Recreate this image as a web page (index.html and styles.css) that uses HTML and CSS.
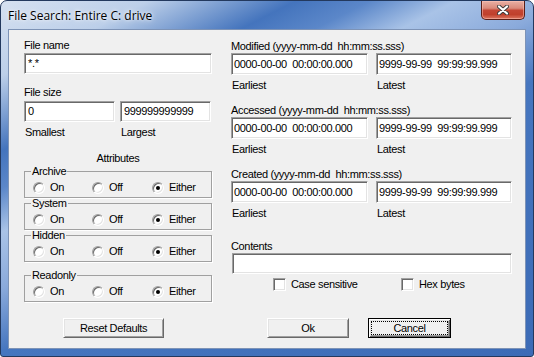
FILE: index.html
```html
<!DOCTYPE html>
<html>
<head>
<meta charset="utf-8">
<title>File Search</title>
<link rel="stylesheet" href="styles.css">
</head>
<body>
<div class="window">
  <div class="titlebar">
    <span class="title">File Search: Entire C: drive</span>
    <div class="close">
      <svg width="12" height="10" viewBox="0 0 12 10">
        <path d="M2 1.5 L10 8.5 M10 1.5 L2 8.5" stroke="#3a3a3a" stroke-width="4" stroke-linecap="round"/>
        <path d="M2 1.5 L10 8.5 M10 1.5 L2 8.5" stroke="#ffffff" stroke-width="2.2" stroke-linecap="round"/>
      </svg>
    </div>
  </div>
  <div class="client">
    <div class="columns">
      <div class="left">
        <div class="lbl">File name</div>
        <div class="field name-field">*.*</div>
        <div class="lbl gap-size">File size</div>
        <div class="pair size-pair">
          <div class="field">0</div>
          <div class="field">999999999999</div>
        </div>
        <div class="pair pair-labels">
          <div class="lbl sub">Smallest</div>
          <div class="lbl sub">Largest</div>
        </div>
        <div class="lbl attr-title">Attributes</div>
        <fieldset class="group">
          <legend>Archive</legend>
          <div class="radios">
            <span class="opt"><span class="radio"></span>On</span>
            <span class="opt"><span class="radio"></span>Off</span>
            <span class="opt"><span class="radio checked"></span>Either</span>
          </div>
        </fieldset>
        <fieldset class="group">
          <legend>System</legend>
          <div class="radios">
            <span class="opt"><span class="radio"></span>On</span>
            <span class="opt"><span class="radio"></span>Off</span>
            <span class="opt"><span class="radio checked"></span>Either</span>
          </div>
        </fieldset>
        <fieldset class="group">
          <legend>Hidden</legend>
          <div class="radios">
            <span class="opt"><span class="radio"></span>On</span>
            <span class="opt"><span class="radio"></span>Off</span>
            <span class="opt"><span class="radio checked"></span>Either</span>
          </div>
        </fieldset>
        <fieldset class="group readonly">
          <legend>Readonly</legend>
          <div class="radios">
            <span class="opt"><span class="radio"></span>On</span>
            <span class="opt"><span class="radio"></span>Off</span>
            <span class="opt"><span class="radio checked"></span>Either</span>
          </div>
        </fieldset>
      </div>
      <div class="right">
        <div class="sect">
          <div class="lbl">Modified (yyyy-mm-dd  hh:mm:ss.sss)</div>
          <div class="dates">
            <div class="field date">0000-00-00  00:00:00.000</div>
            <div class="field date">9999-99-99  99:99:99.999</div>
          </div>
          <div class="dates sublabels">
            <div class="lbl">Earliest</div>
            <div class="lbl">Latest</div>
          </div>
        </div>
        <div class="sect">
          <div class="lbl">Accessed (yyyy-mm-dd  hh:mm:ss.sss)</div>
          <div class="dates">
            <div class="field date">0000-00-00  00:00:00.000</div>
            <div class="field date">9999-99-99  99:99:99.999</div>
          </div>
          <div class="dates sublabels">
            <div class="lbl">Earliest</div>
            <div class="lbl">Latest</div>
          </div>
        </div>
        <div class="sect">
          <div class="lbl">Created (yyyy-mm-dd  hh:mm:ss.sss)</div>
          <div class="dates">
            <div class="field date">0000-00-00  00:00:00.000</div>
            <div class="field date">9999-99-99  99:99:99.999</div>
          </div>
          <div class="dates sublabels">
            <div class="lbl">Earliest</div>
            <div class="lbl">Latest</div>
          </div>
        </div>
        <div class="contents">
          <div class="lbl">Contents</div>
          <div class="field contents-field"></div>
          <div class="checks">
            <span class="chk"><span class="box"></span>Case sensitive</span>
            <span class="chk"><span class="box"></span>Hex bytes</span>
          </div>
        </div>
      </div>
    </div>
    <div class="buttons">
      <div class="btn reset">Reset Defaults</div>
      <div class="btn ok">Ok</div>
      <div class="btn cancel"><span class="focus">Cancel</span></div>
    </div>
  </div>
</div>
</body>
</html>
```

FILE: styles.css
```css
* { box-sizing: border-box; }
html, body { margin: 0; padding: 0; }
body {
  width: 534px;
  height: 357px;
  overflow: hidden;
  background: #ffffff;
  font-family: "Liberation Sans", Arial, sans-serif;
  font-size: 11px;
  letter-spacing: -0.35px;
  color: #000;
}
.window {
  width: 534px;
  height: 357px;
  border: 1px solid #23395e;
  border-radius: 7px 7px 3px 3px;
  background: linear-gradient(153deg, #d6e1f1 0%, #bccfe9 12%, #4474bd 24%, #5b87c9 30%, #a9c3e7 37%, #8aaadb 46%, #4676bf 56%, #3c6bb6 100%);
  display: flex;
  flex-direction: column;
  padding: 0 7px 7px 7px;
}
.titlebar {
  height: 28px;
  display: flex;
  align-items: flex-start;
}
.title {
  margin-top: 7px;
  font-family: "Open Sans", "Noto Sans", sans-serif;
  font-size: 12px;
  letter-spacing: 0;
  line-height: 16px;
  color: #000;
  text-shadow: 0 0 6px rgba(255,255,255,0.9), 0 0 3px rgba(255,255,255,0.8);
}
.close {
  margin-left: auto;
  margin-right: 1px;
  width: 44px;
  height: 19px;
  border: 1px solid #5a1e17;
  border-top: none;
  border-radius: 0 0 5px 5px;
  background: linear-gradient(#e9b0a4 0%, #da8a7b 40%, #c44634 52%, #c0402c 75%, #dd7660 100%);
  box-shadow: inset 0 0 0 1px rgba(255,200,190,0.5);
  display: flex;
  align-items: center;
  justify-content: center;
}
.close svg { display: block; }
.client {
  flex: 1;
  background: #f0f0f0;
  border: 1px solid #7d93b6;
  padding: 9px 13px 0 15px;
  display: flex;
  flex-direction: column;
}
.columns {
  display: grid;
  grid-template-columns: 188px 281px;
  column-gap: 19px;
  align-items: start;
}
.lbl {
  display: block;
  height: 13px;
  line-height: 13px;
  white-space: pre;
}
.field {
  background: #fff;
  height: 21px;
  border: 1px solid;
  border-color: #a0a0a0 #ffffff #ffffff #a0a0a0;
  box-shadow: inset 1px 1px 0 #696969, inset -1px -1px 0 #e3e3e3;
  padding: 0 3px;
  line-height: 19px;
  white-space: pre;
  overflow: hidden;
}
.name-field { margin-top: 1px; }
.gap-size { margin-top: 12px; }
.pair {
  display: grid;
  grid-template-columns: 91px 91px;
  column-gap: 5px;
}
.size-pair { margin-top: 2px; }
.pair-labels { margin-top: 4px; }
.pair-labels .lbl { padding-left: 1px; }
.attr-title { margin-top: 13px; text-align: center; }
.group {
  margin: 0;
  padding: 0 0 3px 0;
  border: 1px solid #a0a0a0;
  box-shadow: 1px 1px 0 #ffffff;
  min-width: 0;
}
.group:first-of-type { margin-top: 1px; }
.group.readonly { margin-top: 8px; }
.group legend {
  padding: 0 1px;
  margin-left: 6px;
  line-height: 11px;
  height: 11px;
}
.radios {
  display: grid;
  grid-template-columns: 59px 60px auto;
  padding: 4px 0 0 8px;
  height: 17px;
}
.opt {
  display: flex;
  align-items: center;
  gap: 5px;
  height: 13px;
  line-height: 13px;
}
.radio {
  width: 12px;
  height: 12px;
  border-radius: 50%;
  border: 1px solid;
  border-color: #a0a0a0 #ffffff #ffffff #a0a0a0;
  box-shadow: inset 1px 1px 0 #696969, inset -1px -1px 0 #e3e3e3;
  background: #fff;
  display: flex;
  align-items: center;
  justify-content: center;
  flex: none;
}
.radio.checked::after {
  content: "";
  width: 4px;
  height: 4px;
  border-radius: 50%;
  background: #000;
}
.right { padding-top: 1px; }
.sect + .sect { margin-top: 12px; }
.dates {
  display: grid;
  grid-template-columns: 137px 136px;
  column-gap: 8px;
}
.field.date { height: 22px; line-height: 20px; padding-left: 2px; }
.sublabels { margin-top: 4px; }
.sublabels .lbl { padding-left: 1px; }
.contents { margin-top: 20px; }
.contents-field { width: 280px; margin-left: 1px; }
.checks {
  margin-top: 4px;
  display: grid;
  grid-template-columns: 128px auto;
  padding-left: 42px;
}
.chk {
  display: flex;
  align-items: center;
  gap: 5px;
  height: 13px;
  line-height: 13px;
}
.box {
  width: 13px;
  height: 13px;
  border: 1px solid;
  border-color: #a0a0a0 #ffffff #ffffff #a0a0a0;
  box-shadow: inset 1px 1px 0 #696969, inset -1px -1px 0 #e3e3e3;
  background: #fff;
  flex: none;
}
.buttons {
  margin-top: 16px;
  display: flex;
  align-items: flex-start;
}
.btn {
  height: 20px;
  background: #f0f0f0;
  border: 1px solid;
  border-color: #ffffff #696969 #696969 #ffffff;
  box-shadow: inset 1px 1px 0 #e3e3e3, inset -1px -1px 0 #a0a0a0;
  display: flex;
  align-items: center;
  justify-content: center;
  line-height: 13px;
}
.reset { width: 101px; margin-left: 39px; }
.ok { width: 82px; margin-left: 103px; }
.cancel {
  width: 83px;
  margin-left: 19px;
  border: 1px solid #000;
  box-shadow: inset 1px 1px 0 #ffffff, inset -1px -1px 0 #696969, inset 2px 2px 0 #e3e3e3, inset -2px -2px 0 #a0a0a0;
  padding: 2px;
}
.focus {
  flex: 1;
  align-self: stretch;
  border: 1px dotted #000;
  display: flex;
  align-items: center;
  justify-content: center;
}
```
